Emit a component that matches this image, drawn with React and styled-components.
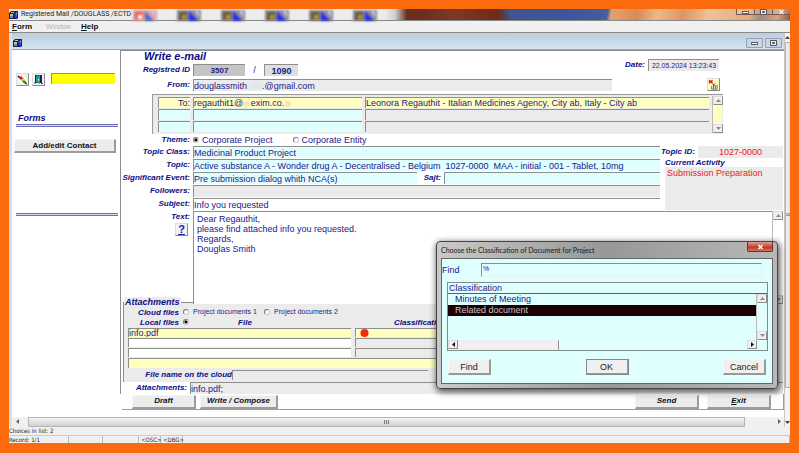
import React from "react";
import styled, { createGlobalStyle, css } from "styled-components";

const c = {
  navy: "#0d0d84",
  ink: "#20208c",
  cyan: "#dfffff",
  yellow: "#ffffc0",
  grey: "#ebebeb",
  line: "#8e8e8e",
  red: "#f5141c",
};

const GlobalStyle = createGlobalStyle`
  * { box-sizing: border-box; }
  body { margin: 0; font: 9px/10px "Liberation Sans", Arial, sans-serif; color: ${c.ink}; }
  input, button, textarea, label { font: inherit; color: inherit; margin: 0; padding: 0; }
  svg { display: block; }
`;

/* ---------- frame ---------- */
const Page = styled.div`
  min-height: 100vh;
  padding: 9px 9px 10px;
  background: #fb6a0c;
  display: flex;
`;
const AppWindow = styled.div`
  position: relative;
  flex: 1;
  min-width: 0;
  display: flex;
  flex-direction: column;
  background: #fff;
  overflow: hidden;
`;
const TitleBar = styled.header`
  display: flex;
  align-items: center;
  gap: 3px;
  height: 12px;
  border-bottom: 1px solid #8a8a8a;
  background:
    linear-gradient(90deg, #ececec 376px, #cfcfcf 386px, transparent 398px),
    linear-gradient(100deg, transparent 590px, #e3a273 594px, #dd8a52 620px, #ecb88c 640px, #df9460 665px, #eec29a 690px, #e6ab7c 730px, #9c8a80 742px, #d9a27c 758px, #6e3a38 776px),
    linear-gradient(75deg, #6b2d1c 400px, #7c3a26 430px, #6f2a18 474px, #3d5590 486px, #3a559b 540px, #47629f 592px);
`;
const WindowTitle = styled.h1`
  margin: 0;
  width: 109px;
  white-space: nowrap;
  color: #1c1c1c;
  font: 7px/11px Roboto, sans-serif;
  flex: none;
`;
const TaskIcons = styled.div`
  display: flex;
  flex: 1;
  gap: 20px;
  filter: blur(1px);
`;
const CaptionButtons = styled.div`
  display: flex;
  height: 8px;
  align-self: flex-start;
`;
const CaptionButton = styled.button`
  width: 18px;
  height: 6px;
  border: 0;
  border-left: 1px solid #7a5a50;
  border-bottom: 1px solid #7a5a50;
  background: rgba(255, 255, 255, 0.15);
  display: flex;
  justify-content: center;
`;
const MenuBar = styled.nav`
  display: flex;
  gap: 10px;
  height: 12px;
  padding: 0 3px;
  background: #f0f0f0;
  border-bottom: 1px solid #8a8a8a;
`;
const MenuItem = styled.button`
  border: 0;
  background: none;
  color: #111;
  font: bold 8px/10px "Liberation Sans", sans-serif;
  &:first-child { margin-right: 4px; }
  &:first-letter { text-decoration: underline; }
  &:disabled { color: #b4b4b4; font-weight: normal; font-size: 7px; }
  &:disabled:first-letter { text-decoration: none; }
`;
const Workspace = styled.div`
  flex: 1;
  display: flex;
  min-height: 0;
`;
const Document = styled.div`
  flex: 1;
  min-width: 0;
  display: flex;
  flex-direction: column;
  border-left: 3px solid #cfe0ee;
`;
const DocumentBar = styled.div`
  display: flex;
  align-items: center;
  justify-content: flex-end;
  gap: 2px;
  height: 17px;
  padding: 3px 2px 0 1px;
  background: linear-gradient(#bccddc, #d6e4f2);
  border-bottom: 1px solid #9aa2aa;
  & > svg { margin-right: auto; }
`;
const DocButton = styled.button`
  width: 17px;
  height: 10px;
  border: 1px solid #93a3b4;
  border-radius: 1px;
  background: #c6d6e6;
  display: flex;
  align-items: center;
  justify-content: center;
`;
const PageBody = styled.div`
  flex: 1;
  display: flex;
`;

/* ---------- shared parts ---------- */
const sunken = css`
  border: 0 solid ${c.line};
  border-width: 1px 0 0 1px;
  outline: none;
`;
const Field = styled.input`
  ${sunken}
  display: block;
  min-width: 0;
  flex: ${(p) => p.$flex || "1"};
  width: ${(p) => p.$w || "100%"};
  height: ${(p) => p.$h || "12px"};
  background: ${(p) => p.$bg || c.cyan};
  text-align: ${(p) => p.$align || "left"};
  font-size: ${(p) => p.$size || "9px"};
  font-weight: ${(p) => p.$weight || "normal"};
  line-height: 10px;
  border-radius: 0;
`;
const SenderField = styled(Field)`
  background-repeat: no-repeat;
  background-image: radial-gradient(ellipse 9px 5px at 62px 6px, #dfe7ec 60%, transparent);
`;
const ToField = styled(Field)`
  background-repeat: no-repeat;
  background-image:
    radial-gradient(circle 4px at 52px 6px, #fbe6b8 70%, transparent),
    radial-gradient(circle 4px at 94px 6px, #fbe6b8 70%, transparent);
`;
const Caption = styled.label`
  flex: none;
  color: ${c.navy};
  font: italic bold 8px/12px "Liberation Sans", sans-serif;
  text-align: right;
  white-space: nowrap;
  width: ${(p) => p.$w || "69px"};
`;
const Row = styled.div`
  display: flex;
  gap: 3px;
  min-height: ${(p) => p.$h || "12px"};
  align-items: center;
`;
const Push = styled.span`
  flex: 1;
`;
const Radio = styled.input.attrs({ type: "radio" })`
  appearance: none;
  flex: none;
  width: 6px;
  height: 6px;
  border-radius: 50%;
  border: 1px solid #777;
  border-right-color: #ccc;
  border-bottom-color: #ccc;
  background: #fff;
  &:checked { background: radial-gradient(circle, #000 1px, #fff 2px); }
`;
const RadioLabel = styled.label`
  font-size: ${(p) => p.$size || "9px"};
  white-space: nowrap;
`;
const PushButton = styled.button`
  flex: none;
  width: ${(p) => p.$w || "64px"};
  height: 14px;
  border: 1px solid #9c9c9c;
  border-width: 1px 2px 2px 1px;
  border-top-color: #f6f6f6;
  border-left-color: #f6f6f6;
  background: #ececec;
  color: #111;
  font: italic bold 8px/10px "Liberation Sans", sans-serif;
`;
const IconButton = styled(PushButton)`
  width: 13px;
  height: 13px;
  border-width: 1px;
  border-color: #ddd #8a8a8a #8a8a8a #ddd;
  background: ${(p) => p.$bg || "#f2f2f2"};
  display: flex;
  align-items: center;
  justify-content: center;
`;

/* ---------- scroll bars ---------- */
const VBar = styled.div`
  flex: none;
  width: ${(p) => p.$w || "10px"};
  display: flex;
  flex-direction: column;
  justify-content: space-between;
  background: ${(p) => p.$bg || "#fff"};
  border-left: 1px solid #bbb;
`;
const HBar = styled.div`
  flex: none;
  display: flex;
  align-items: stretch;
  height: 10px;
  background: ${(p) => p.$bg || "#f0f0f0"};
`;
const BarButton = styled.button`
  flex: none;
  width: 10px;
  height: 9px;
  border: 1px solid #ddd;
  border-right-color: #8c8c8c;
  border-bottom-color: #8c8c8c;
  background: #f0f0f0;
  display: flex;
  align-items: center;
  justify-content: center;
`;
const FlatBarButton = styled(BarButton)`
  border: 0;
  background: none;
`;
const FormThumb = styled.div`
  flex: 1;
  margin: 0 29px 0 6px;
  display: flex;
  align-items: center;
  justify-content: center;
  border: 1px solid #b5b5b5;
  background: linear-gradient(#f4f4f4, #cfcfcf);
`;
const ListThumb = styled.div`
  width: 101px;
  border: 1px solid #eee;
  border-right-color: #8c8c8c;
  background: #f0f0f0;
`;
const OuterBar = styled.div`
  flex: none;
  width: 6px;
  display: flex;
  flex-direction: column;
  align-items: center;
  justify-content: space-between;
  border-left: 1px solid #c8c8c8;
  background: #f4f4f4;
  overflow: hidden;
`;
const OuterThumb = styled.div`
  flex: 1;
  width: 100%;
  margin-bottom: 30px;
  border: 1px solid #b5b5b5;
  border-right: 0;
  display: flex;
  align-items: center;
  justify-content: flex-end;
  background: linear-gradient(90deg, #f4f4f4, #dedede);
`;

/* ---------- sidebar ---------- */
const Sidebar = styled.aside`
  flex: none;
  width: 108px;
  padding: 23px 2px 0 4px;
  background: #fff;
`;
const Tools = styled.div`
  display: flex;
  gap: 3px;
  align-items: flex-start;
`;
const SearchBox = styled.input`
  ${sunken}
  width: 64px;
  height: 11px;
  margin-left: 3px;
  background: #ffff00;
`;
const SideHeading = styled.h2`
  margin: 27px 0 0;
  padding-left: 2px;
  color: ${c.navy};
  font: italic bold 9px/10px "Liberation Sans", sans-serif;
`;
const DoubleRule = styled.hr`
  margin: ${(p) => p.$top} 0 0;
  height: 3px;
  border: 0 solid #6c6cb8;
  border-width: 1px 0;
  background: #d9d9f0;
`;
const SideButton = styled(PushButton)`
  display: block;
  width: 102px;
  margin: 12px 0 0 -2px;
  font-style: normal;
`;

/* ---------- form ---------- */
const Form = styled.main`
  flex: 1;
  min-width: 0;
  display: flex;
  flex-direction: column;
  background: #fff;
`;
const Sheet = styled.section`
  border: 0 solid #8c8c8c;
  border-width: 1px 0 0 1px;
  padding-right: 1px;
`;
const SheetTop = styled.div`
  display: flex;
  justify-content: space-between;
  padding-right: 64px;
`;
const FormTitle = styled.h2`
  margin: 0 0 2px 23px;
  color: ${c.navy};
  font: italic bold 11px/11px "Liberation Sans", sans-serif;
`;
const Slash = styled.span`
  width: 13px;
  text-align: center;
`;
const DateRow = styled(Row)`
  align-self: flex-start;
  margin-top: 8px;
`;
const FromLine = styled.div`
  display: flex;
  margin-right: 63px;
  padding: 2px 0;
  height: 18px;
  gap: 95px;
  & > :first-child { flex: 1; }
`;
const Recipients = styled.div`
  display: flex;
  align-items: stretch;
  margin: 0 60px 0 31px;
  padding: 1px 1px 1px 2px;
  background: ${c.grey};
  border: 0 solid #9a9a9a;
  border-width: 1px 0 0 1px;
`;
const Grid = styled.table`
  flex: 1;
  min-width: 0;
  table-layout: fixed;
  width: 100%;
  border-spacing: ${(p) => p.$spacing};
  td { padding: 0; }
`;
const Col = styled.col`
  width: ${(p) => p.$w || "auto"};
`;
const ThemeGap = styled.span`
  width: 14px;
`;
const Topic = styled.div`
  display: flex;
  gap: 1px;
`;
const TopicFields = styled.div`
  flex: 1;
  min-width: 0;
  display: flex;
  flex-direction: column;
  gap: 1px;
`;
const TopicSide = styled.div`
  flex: none;
  width: 122px;
  display: flex;
  flex-direction: column;
`;
const TopicId = styled.output`
  flex: 1;
  height: 12px;
  line-height: 12px;
  text-align: center;
  background: ${c.grey};
  color: ${c.red};
`;
const SideCaption = styled.div`
  margin-left: 4px;
  color: ${c.navy};
  font: italic bold 8px/9px "Liberation Sans", sans-serif;
`;
const Activity = styled.output`
  flex: 1;
  margin-left: 4px;
  padding: 1px 2px;
  background: ${c.grey};
  color: ${c.red};
`;
const MessageRow = styled.div`
  display: flex;
  margin-top: 1px;
  height: 93px;
`;
const MessageSide = styled.div`
  width: 69px;
  margin-right: 3px;
  flex: none;
  display: flex;
  flex-direction: column;
  align-items: flex-end;
`;
const HelpButton = styled(IconButton)`
  margin-right: 2px;
  color: #1515b5;
  font: bold 11px/11px "Liberation Sans", sans-serif;
  text-decoration: underline;
`;
const Message = styled.textarea`
  ${sunken}
  flex: 1;
  min-width: 0;
  padding: 2px 3px;
  resize: none;
  background: #fff;
  line-height: 10px;
  overflow: hidden;
`;
const Attachments = styled.fieldset`
  min-width: 0;
  margin: -7px 0 0 2px;
  padding: 0 2px 0 0;
  border: 0 solid #8c8c8c;
  border-width: 1px 0 0 1px;
  background: ${c.grey};
`;
const Legend = styled.legend`
  padding: 0 1px;
  color: ${c.navy};
  background: ${c.grey};
  font: italic bold 9px/10px "Liberation Sans", sans-serif;
`;
const Sources = styled.div`
  display: grid;
  grid-template-columns: 55px 6px 67px 6px 1fr;
  column-gap: 4px;
  align-items: center;
`;
const SourceCaption = styled(Caption)`
  width: 55px;
  line-height: 9px;
`;
const ColumnHeads = styled.div`
  grid-column: 3 / -1;
  display: flex;
  padding-top: 2px;
  color: ${c.navy};
  font: italic bold 8px/8px "Liberation Sans", sans-serif;
`;
const Head = styled.span`
  width: ${(p) => p.$w};
  text-align: center;
`;
const FilesRow = styled.div`
  display: flex;
  margin-right: 4px;
`;
const Marker = styled.div`
  ${sunken}
  height: 9px;
  padding-left: 4px;
  background: ${(p) => p.$bg};
`;
const WideField = styled(Field)`
  height: 10px;
  width: calc(100% - 14px);
  margin: 0 0 1px 4px;
`;
const CloudRow = styled(Row)`
  gap: 0;
  padding-bottom: 1px;
`;
const Actions = styled.footer`
  display: flex;
  gap: 4px;
  align-items: center;
  margin-left: 2px;
  padding: 0 12px 0 10px;
  height: 16px;
  border: 0 solid #9c9c9c;
  border-width: 0 1px 1px 0;
`;
const ExitButton = styled(PushButton)`
  margin-left: 4px;
  &:first-letter { text-decoration: underline; }
`;

/* ---------- status ---------- */
const Status = styled.footer`
  height: 16px;
  overflow: hidden;
  background: #f0f0f0;
  color: #222;
  font: 6px/8px "DejaVu Sans Condensed", sans-serif;
`;
const StatusCells = styled.div`
  display: flex;
  gap: 2px;
  border-top: 1px solid #ccc;
`;
const StatusCell = styled.span`
  flex: ${(p) => (p.$w ? "none" : 1)};
  width: ${(p) => p.$w || "auto"};
  height: 9px;
  border-right: 1px solid #bbb;
  white-space: nowrap;
`;

/* ---------- dialog ---------- */
const Dialog = styled.section`
  position: absolute;
  right: 12px;
  bottom: 54px;
  width: 342px;
  padding: 0 4px 4px;
  border: 1px solid #444;
  border-radius: 4px;
  background: linear-gradient(90deg, #c9c9c9, #979797 50%, #b8b8b8);
  box-shadow: 1px 2px 6px 1px rgba(0, 0, 0, 0.65);
`;
const DialogBar = styled.header`
  display: flex;
  justify-content: space-between;
  height: 16px;
`;
const DialogTitle = styled.h2`
  margin: 0;
  color: #161616;
  font: 7px/16px Lato, sans-serif;
`;
const CloseButton = styled.button`
  width: 26px;
  height: 10px;
  border: 1px solid #70302a;
  border-top: 0;
  border-radius: 0 0 2px 2px;
  background: linear-gradient(#dfa096, #c04a35 50%, #b8321c 51%, #d7745c);
  display: flex;
  align-items: center;
  justify-content: center;
`;
const DialogBody = styled.div`
  border: 1px solid #666;
  background: ${c.cyan};
  padding: 4px 4px 8px 0;
`;
const FindRow = styled.div`
  display: flex;
  align-items: center;
  padding-right: 6px;
  label { width: 39px; }
`;
const FindInput = styled(Field)`
  height: 14px;
  padding: 0 0 4px 1px;
  border-right: 1px solid #eee;
  border-bottom: 1px solid #eee;
`;
const List = styled.div`
  margin: 5px 0 8px 5px;
  border: 1px solid #7f8c8c;
`;
const ListHead = styled.div`
  padding: 0 0 0 1px;
  border-bottom: 1px solid #4a58b8;
`;
const ListMain = styled.div`
  display: flex;
  height: 46px;
`;
const Options = styled.ul`
  flex: 1;
  margin: 0;
  padding: 0;
  list-style: none;
`;
const Option = styled.li`
  height: 11px;
  padding-left: 7px;
  background: ${(p) => (p.$selected ? "#1c0004" : "transparent")};
  color: ${(p) => (p.$selected ? "#c9c0c0" : c.ink)};
`;
const ListFoot = styled(HBar)`
  margin-right: 10px;
`;
const DialogActions = styled.div`
  display: flex;
  justify-content: space-between;
  padding: 0 2px 0 6px;
`;
const DialogButton = styled.button`
  width: 43px;
  height: 16px;
  border: 1px solid #f8f8f8;
  border-right: 2px solid #999;
  border-bottom: 2px solid #999;
  outline: ${(p) => (p.$main ? "1px solid #888" : "none")};
  outline-offset: -1px;
  background: #f0f0f0;
  color: #222;
`;

/* ---------- drawings ---------- */
const Arrow = ({ dir = "up", color = "#8a8a8a" }) => {
  const d = { up: "M0 4L2.5 1L5 4Z", down: "M0 1L2.5 4L5 1Z", left: "M4 0L1 2.5L4 5Z", right: "M1 0L4 2.5L1 5Z" }[dir];
  return (
    <svg width="5" height="5" viewBox="0 0 5 5" aria-hidden="true"><path d={d} fill={color} /></svg>
  );
};
const Grip = ({ vertical }) => (
  <svg width="5" height="4" viewBox="0 0 5 4" aria-hidden="true">
    <path d={vertical ? "M0 .5H5M0 2.5H5" : "M.5 0V4M2.5 0V4M4.5 0V4"} stroke="#777" fill="none" />
  </svg>
);
const MailIcon = () => (
  <svg width="9" height="8" viewBox="0 0 9 8" aria-hidden="true">
    <path d="M0 2L2 0H9V7L8 8H0Z" fill="#1c1c66" />
    <path d="M1 3H4V5H1Z" fill="#d8c840" />
    <path d="M1 5H4V7H1Z" fill="#6c8c98" />
    <path d="M2 1H5V2H2Z" fill="#b8c4e0" />
    <path d="M5 2H8V7H6Z" fill="#2c34f4" />
    <path d="M7 1L8 2V5Z" fill="#dfe4ff" />
  </svg>
);
const TaskIcon = ({ red }) => (
  <svg width="24" height="12" viewBox="0 0 24 12" aria-hidden="true">
    <path d="M0 1H24V12H0Z" fill={red ? "#e0a0a0" : "#8b8b98"} />
    <path d="M2 3H10V11H2Z" fill={red ? "#f06060" : "#6b5a3a"} />
    <path d="M5 6H9V10H5Z" fill={red ? "#fff" : "#b0a040"} />
    <path d="M12 2L21 12H12Z" fill={red ? "#4870c8" : "#2c2cf0"} />
    <path d="M18 2H22V9Z" fill="#c8c8e8" />
  </svg>
);
const PencilIcon = () => (
  <svg width="11" height="11" viewBox="0 0 11 11" aria-hidden="true">
    <path d="M1 2H7L10 6V10H4Z" fill="#fff" />
    <path d="M1 2L3 4" stroke="#111" strokeWidth="1.5" />
    <path d="M3 3L6 6" stroke="#e02020" strokeWidth="3" />
    <path d="M5 5L7 7" stroke="#e8d820" strokeWidth="3" />
    <path d="M6 7L9 9" stroke="#209030" strokeWidth="2.5" />
    <path d="M8 9L10 10" stroke="#111" />
  </svg>
);
const DoorIcon = () => (
  <svg width="11" height="11" viewBox="0 0 11 11" aria-hidden="true">
    <path d="M2 1H9V9H2Z" fill="#222" />
    <path d="M3 2L7 1V10L3 8Z" fill="#18a0a8" />
    <path d="M1 9H3M8 9.5H10" stroke="#555" />
    <path d="M5.5 5V6.5" stroke="#eee" />
  </svg>
);
const ClearIcon = () => (
  <svg width="12" height="12" viewBox="0 0 12 12" aria-hidden="true">
    <path d="M1 1L5 4M5 1L1 4" stroke="#d81818" strokeWidth="1.5" />
    <path d="M4 7V10.5H10V6" stroke="#666" fill="none" />
    <path d="M6 10V6L8 4M8 10V6" stroke="#555" fill="none" />
    <path d="M5 5L7 6" stroke="#222" />
  </svg>
);
const BoxIcon = ({ kind, color = "#555" }) => (
  <svg width="7" height="6" viewBox="0 0 7 6" aria-hidden="true">
    {kind === "min" && <path d="M.5 2.5H6.5V4.5H.5Z" stroke={color} fill="#fff" />}
    {kind === "max" && <path d="M.5 .5H6.5V5.5H.5ZM2.5 2.5H4.5V3.5H2.5Z" stroke={color} fill="#e8eef4" />}
    {kind === "close" && <path d="M1.5 1L5.5 5M5.5 1L1.5 5" stroke={color} strokeWidth="1.5" />}
  </svg>
);
const Dot = () => (
  <svg width="9" height="8" viewBox="0 0 9 8" role="img" aria-label="Not classified">
    <circle cx="4.5" cy="4" r="4" fill="#f72a10" />
  </svg>
);

const VScroll = ({ w, bg }) => (
  <VBar $w={w} $bg={bg}>
    <BarButton aria-label="Scroll up"><Arrow /></BarButton>
    <BarButton aria-label="Scroll down"><Arrow dir="down" /></BarButton>
  </VBar>
);

const recipients = [
  { kind: "To:", mail: "regauthit1@\u00a0\u00a0 exim.co.", name: "Leonora Regauthit - Italian Medicines Agency, City ab, Italy - City ab" },
  { kind: "", mail: "", name: "" },
  { kind: "", mail: "", name: "" },
];
const files = ["info.pdf", "", ""];
const message = "Dear Regauthit,\nplease find attached info you requested.\nRegards,\nDouglas Smith";

function RecipientTable() {
  return (
    <Recipients>
      <Grid $spacing="3px 1px" aria-label="Recipients">
        <colgroup><Col $w="32px" /><Col $w="169px" /><Col /></colgroup>
        <tbody>
          {recipients.map((r, i) => {
            const bg = i === 0 ? c.yellow : c.cyan;
            const Mail = i === 0 ? ToField : Field;
            return (
              <tr key={i}>
                <td><Field $h="11px" $bg={bg} $align="right" defaultValue={r.kind} aria-label="Kind" /></td>
                <td><Mail $h="11px" $bg={bg} defaultValue={r.mail} aria-label="Address" /></td>
                <td><Field $h="11px" $bg={i === 0 ? c.yellow : c.grey} defaultValue={r.name} aria-label="Name" /></td>
              </tr>
            );
          })}
        </tbody>
      </Grid>
      <VScroll bg={c.yellow} />
    </Recipients>
  );
}

function AttachmentBox() {
  return (
    <Attachments>
      <Legend>Attachments</Legend>
      <Sources>
        <SourceCaption as="span">Cloud files</SourceCaption>
        <Radio name="source" id="cloud1" />
        <RadioLabel $size="7px" htmlFor="cloud1">Project documents 1</RadioLabel>
        <Radio name="source" id="cloud2" />
        <RadioLabel $size="7px" htmlFor="cloud2">Project documents 2</RadioLabel>
        <SourceCaption htmlFor="local">Local files</SourceCaption>
        <Radio name="source" id="local" defaultChecked />
        <ColumnHeads><Head $w="104px">File</Head><Head $w="246px">Classification</Head></ColumnHeads>
      </Sources>
      <FilesRow>
        <Grid $spacing="4px 1px" aria-label="Attached files">
          <colgroup><Col $w="223px" /><Col /></colgroup>
          <tbody>
            {files.map((f, i) => (
              <tr key={i}>
                <td><Field $h="9px" $bg={i === 0 ? c.yellow : "#fff"} defaultValue={f} aria-label="File" /></td>
                <td><Marker $bg={i === 0 ? c.yellow : c.grey}>{i === 0 && <Dot />}</Marker></td>
              </tr>
            ))}
          </tbody>
        </Grid>
        <VScroll />
      </FilesRow>
      <WideField $bg={c.yellow} aria-label="Path" />
      <CloudRow $h="10px">
        <Caption $w="108px" htmlFor="cloudName">File name on the cloud</Caption>
        <Field id="cloudName" $flex="none" $w="196px" $h="10px" $bg={c.grey} />
      </CloudRow>
    </Attachments>
  );
}

function ClassificationDialog() {
  return (
    <Dialog role="dialog" aria-labelledby="dlgTitle">
      <DialogBar>
        <DialogTitle id="dlgTitle">Choose the Classification of Document for Project</DialogTitle>
        <CloseButton aria-label="Close"><BoxIcon kind="close" color="#fff" /></CloseButton>
      </DialogBar>
      <DialogBody>
        <FindRow>
          <label htmlFor="find">Find</label>
          <FindInput id="find" $size="7px" defaultValue="%" />
        </FindRow>
        <List>
          <ListHead>Classification</ListHead>
          <ListMain>
            <Options role="listbox" aria-label="Classification">
              <Option role="option">Minutes of Meeting</Option>
              <Option role="option" aria-selected="true" $selected>Related document</Option>
            </Options>
            <VScroll w="11px" bg={c.cyan} />
          </ListMain>
          <ListFoot $bg={c.cyan}>
            <BarButton aria-label="Scroll left"><Arrow dir="left" color="#111" /></BarButton>
            <ListThumb />
            <Push />
            <BarButton aria-label="Scroll right"><Arrow dir="right" color="#111" /></BarButton>
          </ListFoot>
        </List>
        <DialogActions>
          <DialogButton>Find</DialogButton>
          <DialogButton $main>OK</DialogButton>
          <DialogButton>Cancel</DialogButton>
        </DialogActions>
      </DialogBody>
    </Dialog>
  );
}

export default function App() {
  return (
    <Page>
      <GlobalStyle />
      <AppWindow>
        <TitleBar>
          <MailIcon />
          <WindowTitle>Registered Mail /DOUGLASS /ECTD</WindowTitle>
          <TaskIcons><TaskIcon red /><TaskIcon /><TaskIcon /><TaskIcon /><TaskIcon /><TaskIcon /></TaskIcons>
          <CaptionButtons>
            <CaptionButton aria-label="Minimize"><BoxIcon kind="min" /></CaptionButton>
            <CaptionButton aria-label="Maximize"><BoxIcon kind="max" /></CaptionButton>
            <CaptionButton aria-label="Close window"><BoxIcon kind="close" color="#eee" /></CaptionButton>
          </CaptionButtons>
        </TitleBar>
        <MenuBar>
          <MenuItem>Form</MenuItem>
          <MenuItem disabled>Window</MenuItem>
          <MenuItem>Help</MenuItem>
        </MenuBar>
        <Workspace>
          <Document>
            <DocumentBar>
              <MailIcon />
              <DocButton aria-label="Minimize document"><BoxIcon kind="min" /></DocButton>
              <DocButton aria-label="Restore document"><BoxIcon kind="max" /></DocButton>
            </DocumentBar>
            <PageBody>
              <Sidebar>
                <Tools>
                  <IconButton aria-label="Edit"><PencilIcon /></IconButton>
                  <IconButton aria-label="Exit form"><DoorIcon /></IconButton>
                  <SearchBox aria-label="Search" />
                </Tools>
                <SideHeading>Forms</SideHeading>
                <DoubleRule $top="1px" />
                <SideButton>Add/edit Contact</SideButton>
                <DoubleRule $top="60px" />
              </Sidebar>
              <Form>
                <Sheet>
                  <SheetTop>
                    <div>
                      <FormTitle>Write e-mail</FormTitle>
                      <Row>
                        <Caption htmlFor="regId">Registred ID</Caption>
                        <Field id="regId" $flex="none" $w="52px" $bg="#c4c4c4" $size="8px" $weight="bold" $align="center" defaultValue="3507" />
                        <Slash>/</Slash>
                        <Field aria-label="Registered number" $flex="none" $w="34px" $bg="#dedede" $weight="bold" $align="center" defaultValue="1090" />
                      </Row>
                    </div>
                    <DateRow>
                      <Caption $w="auto" htmlFor="date">Date:</Caption>
                      <Field id="date" $flex="none" $w="71px" $bg={c.grey} $size="7px" $align="center" defaultValue="22.05.2024 13:23:43" />
                    </DateRow>
                  </SheetTop>
                  <FromLine>
                    <Row>
                      <Caption htmlFor="from">From:</Caption>
                      <SenderField id="from" $bg={c.grey} defaultValue={"douglassmith\u00a0\u00a0\u00a0\u00a0\u00a0 .@gmail.com"} />
                    </Row>
                    <IconButton $bg={c.yellow} aria-label="Remove recipient"><ClearIcon /></IconButton>
                  </FromLine>
                  <RecipientTable />
                  <Row $h="11px">
                    <Caption as="span">Theme:</Caption>
                    <Radio name="theme" id="project" defaultChecked />
                    <RadioLabel htmlFor="project">Corporate Project</RadioLabel>
                    <ThemeGap />
                    <Radio name="theme" id="entity" />
                    <RadioLabel htmlFor="entity">Corporate Entity</RadioLabel>
                  </Row>
                  <Topic>
                    <TopicFields>
                      <Row><Caption htmlFor="class">Topic Class:</Caption><Field id="class" defaultValue="Medicinal Product Project" /></Row>
                      <Row><Caption htmlFor="topic">Topic:</Caption><Field id="topic" defaultValue={"Active substance A - Wonder drug A - Decentralised - Belgium\u00a0 1027-0000\u00a0 MAA - initial - 001 - Tablet, 10mg"} /></Row>
                      <Row>
                        <Caption htmlFor="event">Significant Event:</Caption><Field id="event" defaultValue="Pre submission dialog whith NCA(s)" />
                        <Caption $w="21px" htmlFor="sajt">Sajt:</Caption><Field id="sajt" $flex="none" $w="216px" />
                      </Row>
                      <Row><Caption htmlFor="followers">Followers:</Caption><Field id="followers" $bg={c.grey} /></Row>
                      <Row><Caption htmlFor="subject">Subject:</Caption><Field id="subject" $bg="#fff" defaultValue="Info you requested" /></Row>
                    </TopicFields>
                    <TopicSide>
                      <Row><Caption $w="auto" as="span">Topic ID:</Caption><TopicId>1027-0000</TopicId></Row>
                      <SideCaption>Current Activity</SideCaption>
                      <Activity>Submission Preparation</Activity>
                    </TopicSide>
                  </Topic>
                  <MessageRow>
                    <MessageSide>
                      <Caption htmlFor="text">Text:</Caption>
                      <HelpButton>?</HelpButton>
                    </MessageSide>
                    <Message id="text" defaultValue={message} />
                    <VScroll w="11px" />
                  </MessageRow>
                  <AttachmentBox />
                  <Row>
                    <Caption $w="66px" htmlFor="summary">Attachments:</Caption>
                    <Field id="summary" $bg={c.grey} defaultValue="info.pdf;" />
                  </Row>
                </Sheet>
                <Actions>
                  <PushButton>Draft</PushButton>
                  <PushButton $w="78px">Write / Compose</PushButton>
                  <Push />
                  <PushButton>Send</PushButton>
                  <ExitButton>Exit</ExitButton>
                </Actions>
              </Form>
            </PageBody>
            <HBar>
              <FlatBarButton aria-label="Scroll form left"><Arrow dir="left" color="#666" /></FlatBarButton>
              <FormThumb><Grip /></FormThumb>
              <FlatBarButton aria-label="Scroll form right"><Arrow dir="right" color="#666" /></FlatBarButton>
            </HBar>
          </Document>
          <OuterBar>
            <FlatBarButton aria-label="Scroll page up"><Arrow color="#444" /></FlatBarButton>
            <OuterThumb><Grip vertical /></OuterThumb>
            <FlatBarButton aria-label="Scroll page down"><Arrow dir="down" color="#444" /></FlatBarButton>
          </OuterBar>
        </Workspace>
        <Status>
          <div>Choices in list: 2</div>
          <StatusCells>
            <StatusCell $w="60px">Record: 1/1</StatusCell>
            <StatusCell $w="32px" />
            <StatusCell $w="34px" />
            <StatusCell $w="20px">&lt;OSC&gt;</StatusCell>
            <StatusCell $w="20px">&lt;DBG&gt;</StatusCell>
            <StatusCell />
          </StatusCells>
        </Status>
        <ClassificationDialog />
      </AppWindow>
    </Page>
  );
}
